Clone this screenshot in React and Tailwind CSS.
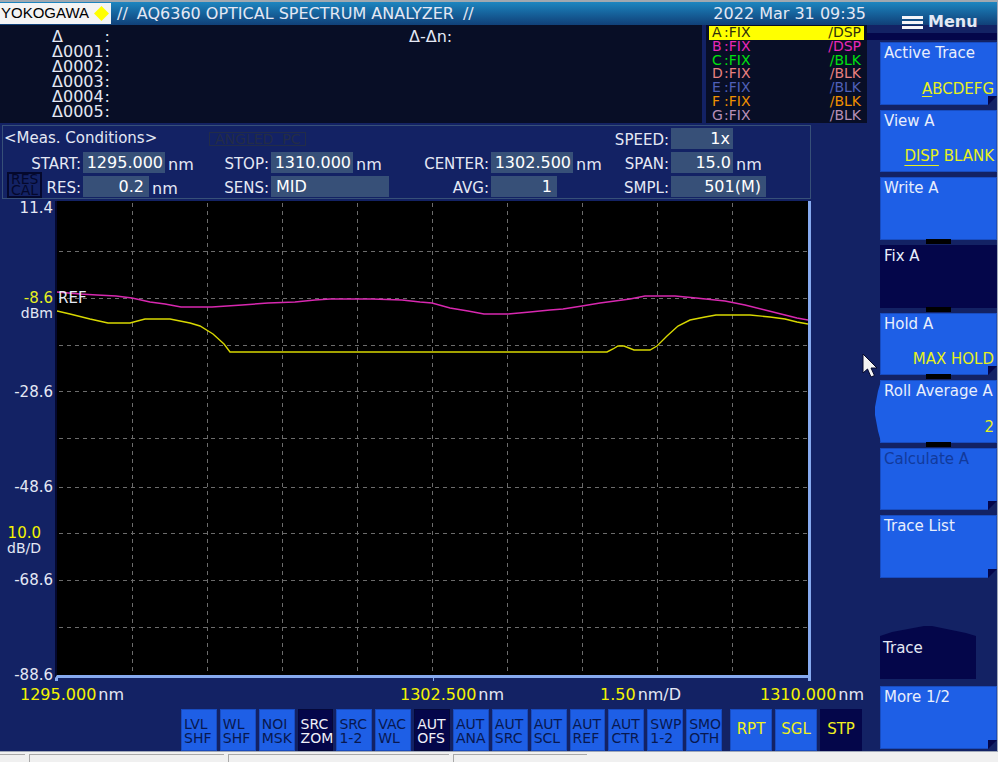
import { useState } from "react";

const traces = [
  { name: "A", mode: "DSP", color: "bg-[#ffff00] text-[#30300a]" },
  { name: "B", mode: "DSP", color: "text-[#e828b8]" },
  { name: "C", mode: "BLK", color: "text-[#00e010]" },
  { name: "D", mode: "BLK", color: "text-[#e88080]" },
  { name: "E", mode: "BLK", color: "text-[#5060b8]" },
  { name: "F", mode: "BLK", color: "text-[#f09000]" },
  { name: "G", mode: "BLK", color: "text-[#b890b8]" },
];

const markers = ["0001", "0002", "0003", "0004", "0005"];

const softKeys = [
  ["LVL", "SHF"],
  ["WL", "SHF"],
  ["NOI", "MSK"],
  ["SRC", "ZOM"],
  ["SRC", "1-2"],
  ["VAC", "WL"],
  ["AUT", "OFS"],
  ["AUT", "ANA"],
  ["AUT", "SRC"],
  ["AUT", "SCL"],
  ["AUT", "REF"],
  ["AUT", "CTR"],
  ["SWP", "1-2"],
  ["SMO", "OTH"],
];

const gridX = [132, 207, 282, 357, 432, 507, 582, 657, 732];
const gridY = [251, 298, 345, 391, 438, 487, 533, 580, 627];

const traceA =
  "57,311 70,314 90,319 108,323 130,323 145,319 170,319 180,321 190,323 200,326 213,334 224,344 230,352 607,352 613,349 618,346 624,346 634,350 650,350 657,346 667,336 678,326 690,320 705,317 716,315 750,315 770,317 785,319 797,322 808,324";
const traceB =
  "57,292 80,294 97,295 116,296 132,298 150,302 165,304 181,307 212,307 242,305 268,303 295,302 315,300 330,299 372,299 402,300 420,302 432,303 450,308 468,311 484,314 508,314 530,312 550,310 563,309 582,306 600,303 615,301 630,299 645,296 675,296 696,298 725,301 745,305 765,310 785,315 797,318 808,320";

function Condition({ label, value, unit, field, icon }) {
  const id = "cond-" + label.toLowerCase();
  return (
    <div className="flex h-[21px] items-center">
      <label
        htmlFor={id}
        className="mr-[2px] flex w-[78px] shrink-0 items-center justify-end pt-1 text-[15px]"
      >
        {icon}
        {label}:
      </label>
      <input
        id={id}
        className={`h-[21px] shrink-0 bg-[#375078] text-[16px] text-white outline-none ${field}`}
        defaultValue={value}
      />
      {unit && <span className="ml-[3px] pt-1 text-[16px]">{unit}</span>}
    </div>
  );
}

function MenuKey({ label, children, active, disabled, corner, link, notch, onClick }) {
  return (
    <button
      onClick={onClick}
      disabled={disabled}
      className={`relative flex w-full flex-col justify-between border px-[3px] pt-px pb-[6px] text-left text-[15px] leading-[18px] whitespace-nowrap ${
        active ? "border-[#04064a] bg-[#04064a]" : "border-[#184cc0] bg-[#1e5fe6]"
      } ${disabled ? "text-[#123a9c]" : "text-[#e8eefc]"}`}
    >
      <span>{label}</span>
      {children && <span className="-mr-px self-end text-[#e6f020]">{children}</span>}
      {corner && (
        <svg className="absolute -right-px -bottom-px" width="9" height="9" viewBox="0 0 9 9">
          <path d="M0 0h9v9H0z" fill="#132264" />
          <path d="M0 0h9L0 9z" fill="#04064a" />
        </svg>
      )}
      {link && <span className="absolute top-full left-[45px] h-[5px] w-[25px] bg-black" />}
      {notch && (
        <svg className="absolute top-0 -left-[7px]" width="7" height="61" viewBox="0 0 7 61">
          <path d="M7 0L4 10L1 26V34L4 50L7 61z" fill="#1e5fe6" />
        </svg>
      )}
    </button>
  );
}

function Header() {
  return (
    <header className="flex h-[25px] items-center justify-between border-t-2 border-[#a0a8b0] bg-linear-to-b from-[#1d86c0] to-[#104078] pr-px text-[16px]">
      <div className="flex items-center">
        <span className="flex h-[21px] w-[111px] items-center justify-between bg-[#f4f4f4] pr-px pl-px font-['Liberation_Sans',sans-serif] text-[15px] text-black">
          YOKOGAWA
          <svg width="17" height="17" viewBox="0 0 17 17">
            <path d="M8.500 1L16 8.500L8.500 16L1 8.500z" fill="#ffff00" />
          </svg>
        </span>
        <span className="ml-[6px]">//</span>
        <h1 className="mx-[9px]">AQ6360 OPTICAL SPECTRUM ANALYZER</h1>
        <span>//</span>
      </div>
      <time>2022 Mar 31 09:35</time>
    </header>
  );
}

function Markers() {
  return (
    <div className="flex flex-1 bg-[#080e26] pt-1 pl-[52px] text-[16px] leading-[15px]">
      <div className="flex w-[58px] flex-col">
        <div className="flex justify-between">
          <span>Δ</span>
          <span>:</span>
        </div>
        {markers.map((m) => (
          <div key={m} className="flex justify-between">
            <span>Δ{m}</span>
            <span>:</span>
          </div>
        ))}
      </div>
      <div className="ml-[299px]">Δ-Δn:</div>
    </div>
  );
}

function Legend() {
  return (
    <div className="grid w-[161px] grid-rows-7 bg-[#080e26] px-[3px] pt-px pb-px text-[14px] leading-[13px]">
      {traces.map((t) => (
        <div key={t.name} className={`flex items-center justify-between px-[3px] ${t.color}`}>
          <span className="flex">
            <span className="w-[12px]">{t.name}</span>
            <span>:FIX</span>
          </span>
          <span>/{t.mode}</span>
        </div>
      ))}
    </div>
  );
}

function Conditions() {
  return (
    <section className="mt-[2px] mr-[56px] ml-[2px] grid grid-cols-[minmax(0,188fr)_minmax(0,220fr)_minmax(0,180fr)_minmax(0,219fr)] gap-y-[3px] border border-[#375078] pt-[2px] pb-px">
      <h2 className="pl-px text-[15px] leading-[21px] whitespace-nowrap">&lt;Meas. Conditions&gt;</h2>
      <div className="flex items-center pl-[18px]">
        <span className="border border-[#222c48] px-[5px] text-[14px] leading-[12px] whitespace-pre text-[#222c48]">
          ANGLED  PC
        </span>
      </div>
      <span />
      <Condition label="SPEED" value="1x" field="w-[62px] px-[3px] text-right" />

      <Condition label="START" value="1295.000" unit="nm" field="w-[82px] px-[2px] text-right" />
      <Condition label="STOP" value="1310.000" unit="nm" field="w-[82px] px-[2px] text-right" />
      <Condition label="CENTER" value="1302.500" unit="nm" field="w-[82px] px-[2px] text-right" />
      <Condition label="SPAN" value="15.0" unit="nm" field="w-[62px] px-[2px] text-right" />

      <Condition
        label="RES"
        value="0.2"
        unit="nm"
        field="w-[66px] px-[5px] text-right"
        icon={
          <span className="-mt-3 -mb-1 mr-auto ml-[4px] border-2 border-[#04082c] px-[2px] text-[14px] leading-[11px] text-[#04082c]">
            RES
            <br />
            CAL
          </span>
        }
      />
      <Condition label="SENS" value="MID" field="w-[118px] px-[5px]" />
      <Condition label="AVG" value="1" field="w-[66px] px-[5px] text-right" />
      <Condition label="SMPL" value="501(M)" field="w-[95px] px-[5px] text-right" />
    </section>
  );
}

function Chart() {
  return (
    <div className="mt-[2px] flex pr-[56px]">
      <div className="grid w-[55px] shrink-0 grid-rows-[90px_94px_95px_46px_47px_95px_10px] pr-[2px] text-right text-[15px] leading-[15px]">
        <span>11.4</span>
        <span>
          <span className="text-[#e6f020]">-8.6</span>
          <br />
          <span className="text-[14px]">dBm</span>
        </span>
        <span>-28.6</span>
        <span>-48.6</span>
        <span className="pr-[12px]">
          <span className="text-[#f4f400]">10.0</span>
          <br />
          <span className="text-[14px]">dB/D</span>
        </span>
        <span>-68.6</span>
        <span>-88.6</span>
      </div>
      <div className="relative flex-1">
        <div className="h-[477px] border-r-[3px] border-b-[3px] border-l-2 border-r-[#86aaf0] border-b-[#86aaf0] border-l-[#04082c] bg-black">
          <svg className="h-full w-full" viewBox="57 201 751 474" preserveAspectRatio="none">
            <g stroke="#6c6c6c" strokeDasharray="4 4">
              {gridX.map((x) => (
                <path key={x} d={`M${x + 0.5} 203V675`} />
              ))}
              {gridY.map((y) => (
                <path key={y} d={`M59 ${y + 0.5}H808`} />
              ))}
            </g>
            <polyline points={traceB} fill="none" stroke="#d828b0" strokeWidth="1.4" />
            <polyline points={traceA} fill="none" stroke="#d8d800" strokeWidth="1.4" />
          </svg>
        </div>
        <span className="absolute top-[88px] left-[3px] text-[15px] leading-[18px]">REF</span>
        {/* axis end and centre ticks */}
        <div className="flex h-[3px] justify-between">
          <span className="w-[3px] bg-[#86aaf0]" />
          <span className="w-px bg-[#86aaf0]" />
          <span className="w-[3px] bg-[#86aaf0]" />
        </div>
      </div>
    </div>
  );
}

function AxisLabels() {
  const items = [
    ["1295.000", "nm"],
    ["1302.500", "nm"],
    ["1.50", "nm/D"],
    ["1310.000", "nm"],
  ];
  return (
    <div className="mt-[4px] grid grid-cols-[380fr_200fr_160fr_107fr] pl-5 text-[16px] leading-[20px] whitespace-nowrap">
      {items.map(([value, unit]) => (
        <span key={value} className="flex gap-[2px]">
          <span className="text-[#f4f400]">{value}</span>
          {unit}
        </span>
      ))}
    </div>
  );
}

function SoftKeys() {
  const [sweep, setSweep] = useState("STP");
  const [on, setOn] = useState([3, 6]);

  const toggle = (i) => {
    setOn((prev) => (prev.includes(i) ? prev.filter((k) => k !== i) : [...prev, i]));
  };

  return (
    <div className="mt-[4px] flex h-[42px] gap-[8px] pr-[5px] pl-[181px]">
      <div className="grid flex-1 grid-cols-14 gap-[3px]">
        {softKeys.map(([top, bottom], i) => (
          <button
            key={i}
            onClick={() => toggle(i)}
            className={`border pt-[2px] pl-[2px] text-left text-[14px] leading-[14px] ${
              on.includes(i)
                ? "border-[#04083a] bg-[#04064a] text-[#f0f0f8]"
                : "border-[#184cc0] bg-[#1e5fe6] text-[#081850]"
            }`}
          >
            {top}
            <br />
            {bottom}
          </button>
        ))}
      </div>
      <div className="flex gap-[3px]">
        {["RPT", "SGL", "STP"].map((k) => (
          <button
            key={k}
            onClick={() => setSweep(k)}
            className={`w-[42px] border pb-[2px] text-[15px] text-[#f0f020] ${
              sweep === k ? "border-[#04064a] bg-[#04064a]" : "border-[#184cc0] bg-[#1e5fe6]"
            }`}
          >
            {k}
          </button>
        ))}
      </div>
    </div>
  );
}

function Menu() {
  const [mode, setMode] = useState("Fix A");
  return (
    <aside className="flex w-[130px] shrink-0 flex-col border-t-2 border-[#a0a8b0]">
      <div className="h-[23px] bg-linear-to-b from-[#1d86c0] to-[#104078] pt-[10px] pl-[35px]">
        <div className="flex items-center gap-[5px] text-[16px] leading-[20px] font-bold">
          <svg width="21" height="13" viewBox="0 0 21 13" fill="#f4f4f8">
            <path d="M0 0h21v3H0zM0 5h21v3H0zM0 10h21v3H0z" />
          </svg>
          Menu
        </div>
      </div>
      <div className="mt-[8px] h-[7px] bg-[#04064a]" />
      <nav className="mt-[2px] ml-[13px] grid h-[536px] grid-rows-8 gap-y-[5px]">
        <MenuKey label="Active Trace" corner>
          <span className="underline underline-offset-2">A</span>BCDEFG
        </MenuKey>
        <MenuKey label="View A">
          <span className="underline underline-offset-4">DISP</span> BLANK
        </MenuKey>
        <MenuKey label="Write A" active={mode === "Write A"} onClick={() => setMode("Write A")} link />
        <MenuKey label="Fix A" active={mode === "Fix A"} onClick={() => setMode("Fix A")} link />
        <MenuKey label="Hold A" corner link>
          MAX HOLD
        </MenuKey>
        <MenuKey label="Roll Average A" link notch>
          2
        </MenuKey>
        <MenuKey label="Calculate A" disabled corner />
        <MenuKey label="Trace List" corner />
      </nav>
      <div className="relative mt-[58px] mr-[21px] ml-[13px] h-[43px] bg-[#04064a] pl-[3px] text-[15px] leading-[24px]">
        <svg
          className="absolute bottom-full left-0 w-full"
          height="10"
          viewBox="0 0 96 10"
          preserveAspectRatio="none"
        >
          <path d="M0 10L12 6L44 0H52L86 7L96 10z" fill="#04064a" />
        </svg>
        Trace
      </div>
      <div className="mt-[7px] ml-[13px] grid h-[63px]">
        <MenuKey label="More 1/2" corner />
      </div>
    </aside>
  );
}

function App() {
  return (
    <div className="relative min-h-screen bg-[#f0f0f0] font-['DejaVu_Sans',Verdana,sans-serif]">
      <div className="flex border-r border-b border-[#a0a8b8] bg-[#132264] text-[#e4e8f4]">
        <main className="min-w-0 flex-1">
          <Header />
          <div className="flex h-[98px] gap-1">
            <Markers />
            <Legend />
          </div>
          <Conditions />
          <Chart />
          <AxisLabels />
          <SoftKeys />
        </main>
        <Menu />
      </div>

      <footer className="mt-[2px] flex h-[8px] gap-1">
        <span className="w-[25px] border-t border-[#a8a8a8]" />
        <span className="w-[195px] border-t border-l border-[#a8a8a8]" />
        <span className="w-[221px] border-t border-l border-[#a8a8a8]" />
        <span className="w-[134px] border-t border-l border-[#a8a8a8]" />
      </footer>

      {/* mouse pointer */}
      <svg className="absolute top-[353px] right-[120px]" width="16" height="27" viewBox="0 0 16 27">
        <path
          d="M1 1V20L5.500 16L9 24L12.500 22.500L9 15H15z"
          fill="#f4f4f4"
          stroke="#04082c"
          strokeWidth="1"
        />
      </svg>
    </div>
  );
}

export default App;
